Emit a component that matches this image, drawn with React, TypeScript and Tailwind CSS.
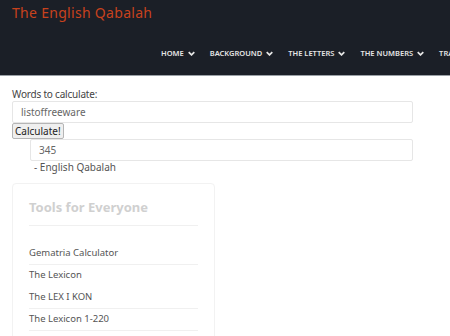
import React from "react";

const Chevron = () => (
  <svg width="7" height="5" viewBox="0 0 10 7" className="ml-[4px] mt-[-1px]">
    <path d="M1 1.5 L5 5.5 L9 1.5" stroke="#e5e5e5" strokeWidth="2.4" fill="none" />
  </svg>
);

export default function App() {
  const font = { fontFamily: '"Noto Sans", "Open Sans", sans-serif' };
  const nav = ["HOME", "BACKGROUND", "THE LETTERS", "THE NUMBERS", "TRANSLATIONS"];
  return (
    <div className="w-[450px] h-[336px] overflow-hidden bg-white" style={font}>
      <header className="h-[76px] bg-[#1b1f27] border-b border-[#9aa0a6] relative">
        <div className="pl-[12px] pt-[2px] text-[14px] text-[#c8421d] tracking-[0.3px]">The English Qabalah</div>
        <nav className="flex items-center pl-[161px] mt-[25px] whitespace-nowrap">
          {nav.map((n, i) => (
            <div key={n} className="flex items-center text-[7.5px] font-semibold text-[#e5e5e5] mr-[15px] shrink-0">
              {n}
              {i < 4 && <Chevron />}
            </div>
          ))}
        </nav>
      </header>
      <main className="px-[12px] pt-[11px]">
        <div className="text-[10px] text-[#444] leading-[14px] tracking-[-0.2px]">Words to calculate:</div>
        <div className="w-[401px] h-[22px] border border-[#e6e6e6] rounded-[2px] flex items-center pl-[8px] text-[10px] text-[#666]">
          listoffreeware
        </div>
        <button className="h-[16px] px-[2px] bg-[#efefef] border border-[#b5b5b5] rounded-[2px] text-[10px] text-[#222] leading-none flex items-center">
          Calculate!
        </button>
        <div className="ml-[18px] w-[383px] h-[22px] border border-[#e6e6e6] rounded-[2px] flex items-center pl-[8px] text-[10px] text-[#666]">
          345
        </div>
        <div className="ml-[22px] text-[10px] text-[#555] leading-[12px] mt-[0px]">- English Qabalah</div>
        <div className="mt-[10px] w-[203px] h-[200px] border border-[#f2f2f2] rounded-[4px] px-[16px] pt-[14px]">
          <div className="text-[13px] font-bold text-[#d0d0d0] pb-[7px] border-b border-[#f0f0f0]">Tools for Everyone</div>
          <div className="mt-[17px] text-[9.5px] text-[#555]">
            <div className="h-[22px] flex items-center border-b border-[#f0f0f0]">Gematria Calculator</div>
            <div className="h-[22px] flex items-center">The Lexicon</div>
            <div className="h-[22px] flex items-center border-b border-[#f0f0f0]">The LEX I KON</div>
            <div className="h-[22px] flex items-center border-b border-[#f0f0f0]">The Lexicon 1-220</div>
          </div>
        </div>
      </main>
    </div>
  );
}
